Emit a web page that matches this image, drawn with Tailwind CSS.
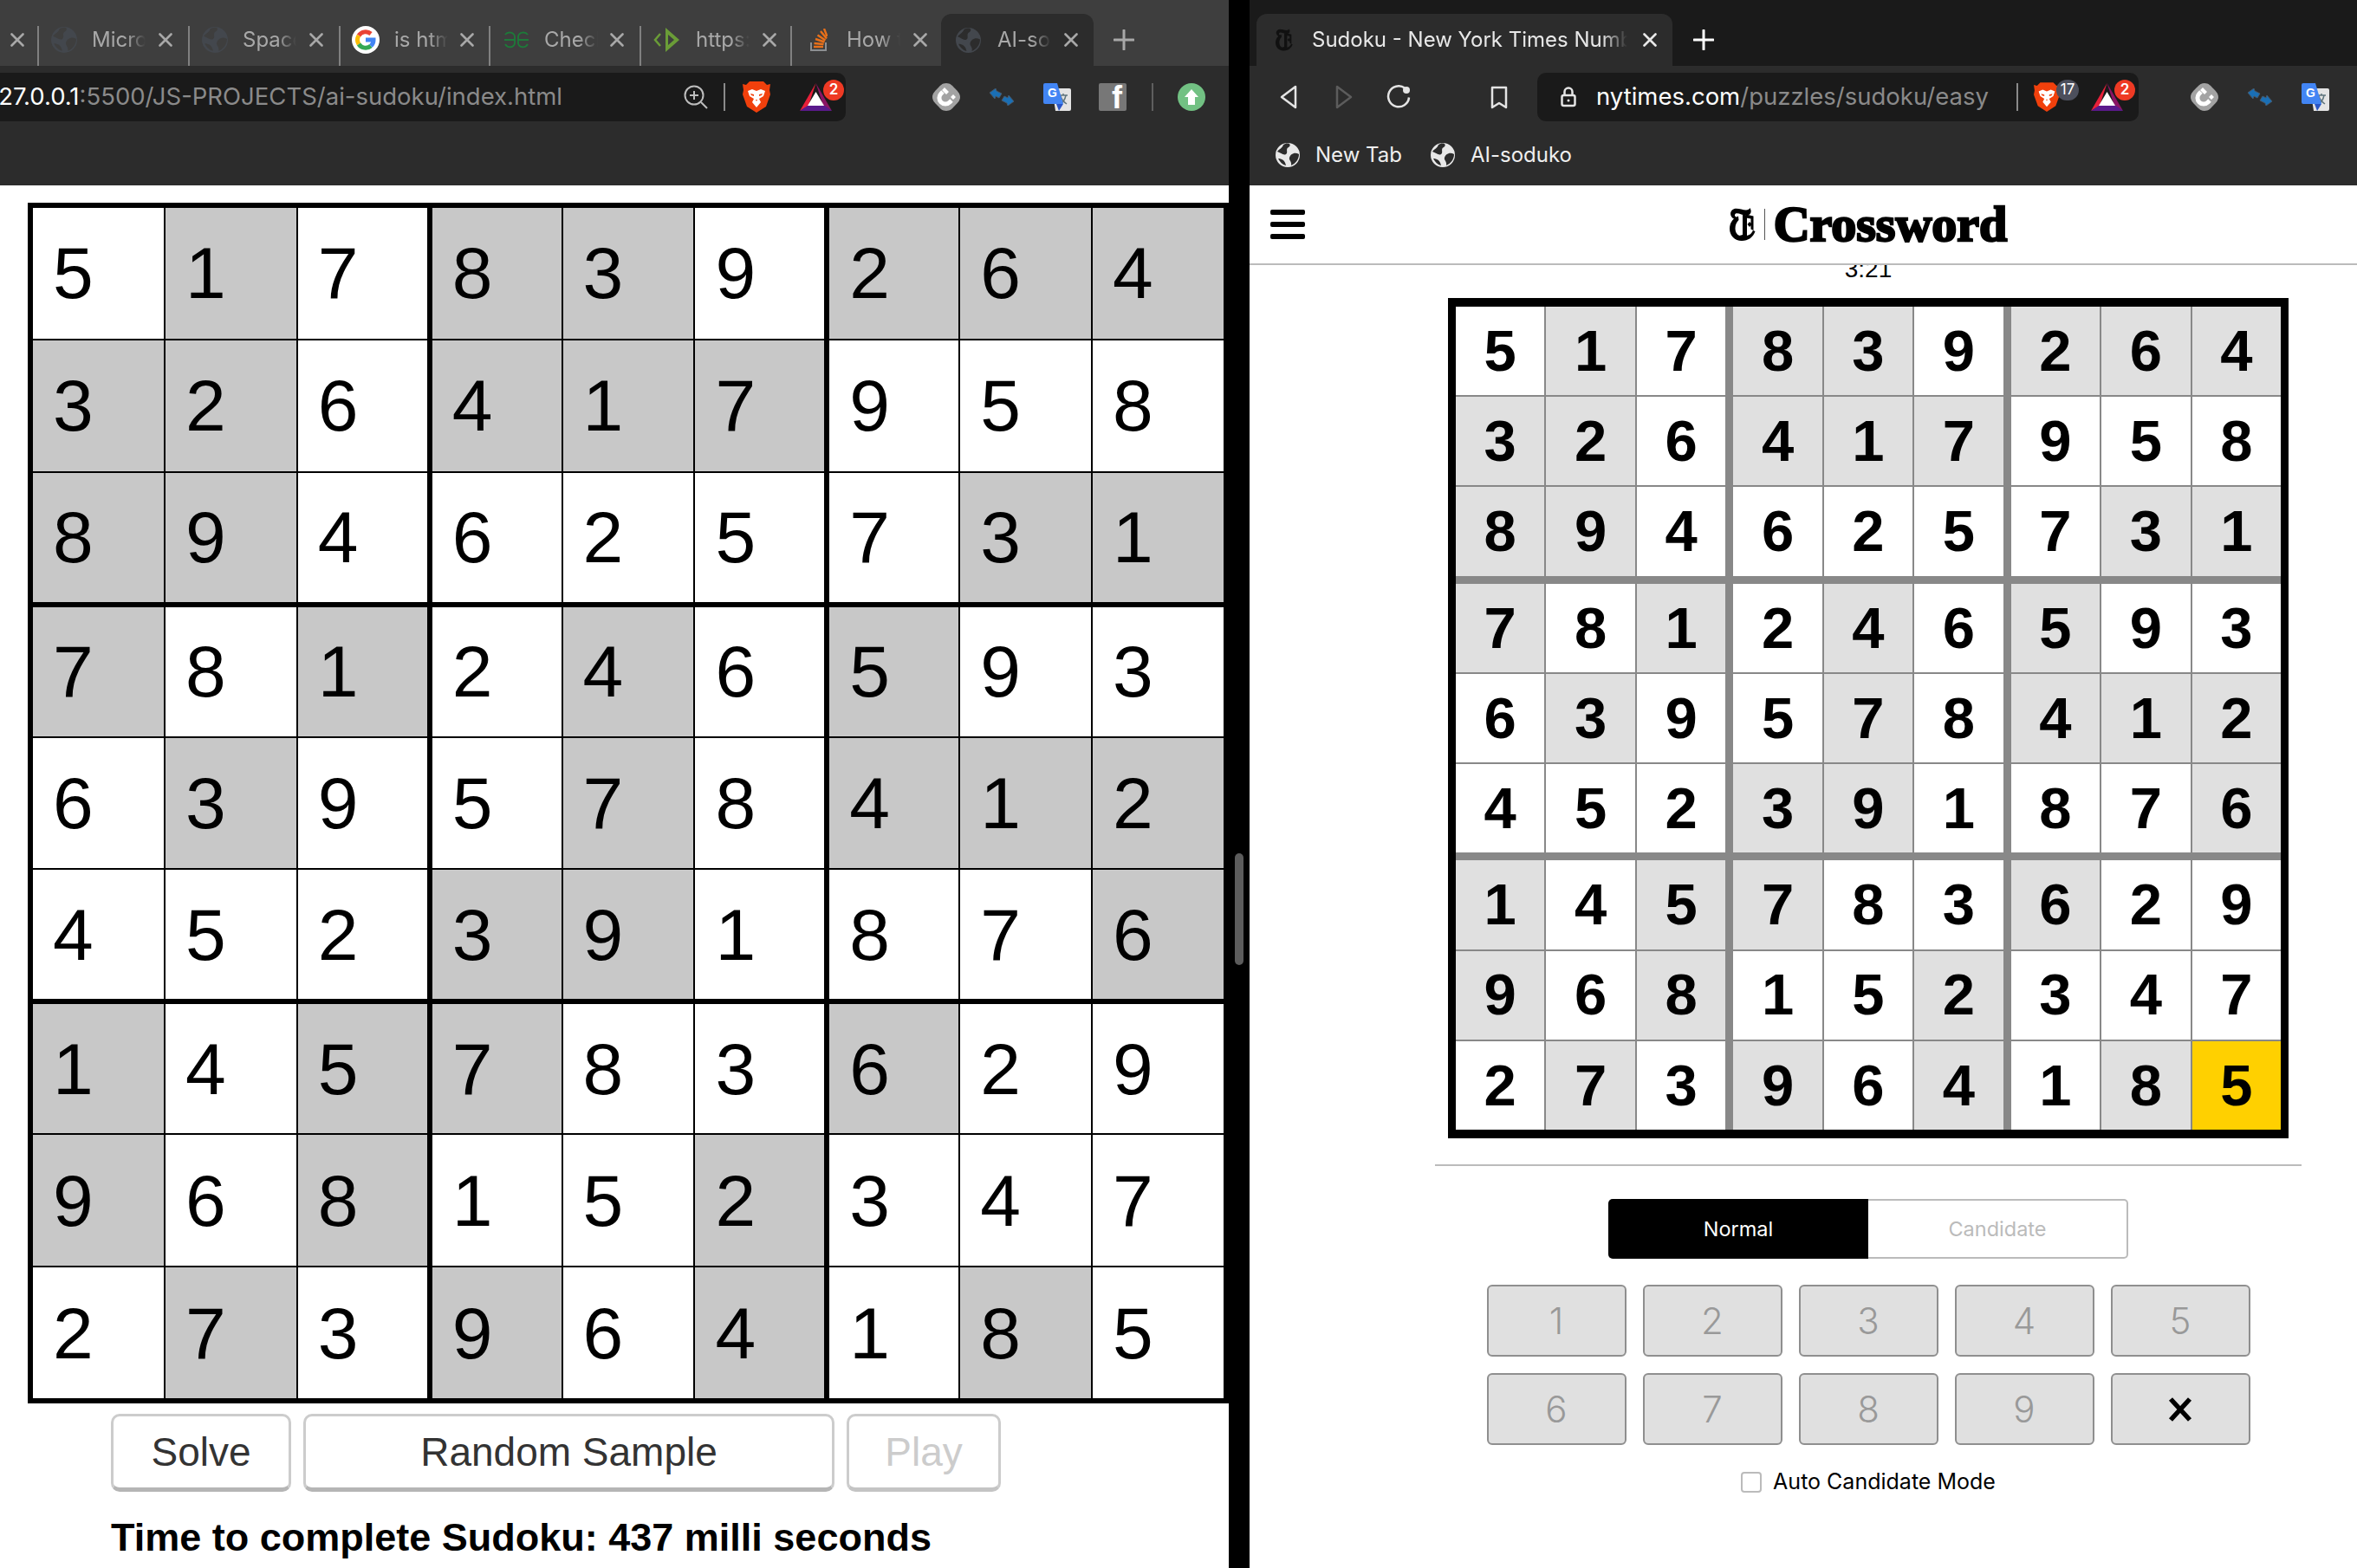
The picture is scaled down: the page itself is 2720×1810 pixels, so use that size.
<!DOCTYPE html>
<html lang="en">
<head>
  <meta charset="UTF-8" />
  <title>AI Sudoku vs NYT</title>
  <script src="https://cdn.jsdelivr.net/npm/@tailwindcss/browser@4"></script>
</head>
<body class="bg-black font-[Inter,sans-serif]">

<!-- shared icons -->
<svg class="hidden">
  <symbol id="x" viewBox="0 0 16 16"><path d="M1.5 1.5l13 13M14.5 1.5l-13 13" stroke="currentColor" stroke-width="2.6" stroke-linecap="round" fill="none"/></symbol>
  <symbol id="plus" viewBox="0 0 24 24"><path d="M12 1v22M1 12h22" stroke="currentColor" stroke-width="3" stroke-linecap="round" fill="none"/></symbol>
  <symbol id="globe" viewBox="0 0 28 28"><path fill="currentColor" fill-rule="evenodd" d="M14 0a14 14 0 1 0 0 28a14 14 0 1 0 0-28zM9 2C8 6 4 7 2 10C6 11 9 15 12 13C15 11 11 7 15 5C17 4 17 2 16 1C13 0 11 1 9 2zM27 13C22 10 17 13 16 17C15 20 19 21 18 26C23 24 27 19 27 13zM3 18C7 18 11 20 12 26C8 25 5 22 3 18z"/></symbol>
  <symbol id="brave" viewBox="0 0 32 36">
    <path fill="#f1400c" d="M8 0h16l4 4 4-1-1 7 1 5-5 14-11 7-11-7L0 15l1-5L0 3l4 1z"/>
    <path fill="#fff" d="M6 11l5-2 5 2 5-2 5 2-2 6-5 3 2 4-5 6-5-6 2-4-5-3z"/>
    <path fill="#f1400c" d="M9 14l4 1v2l-3-1zM23 14l-4 1v2l3-1zM15 21h2l-1 2z"/>
  </symbol>
  <symbol id="bat" viewBox="0 0 37 32">
    <path fill="#e8203a" d="M18.500 0L0 32L10 26z"/>
    <path fill="#8b1464" d="M18.500 0L37 32L27 26z"/>
    <path fill="#5a1a8c" d="M0 32h37l-8-6H9z"/>
    <path fill="#fff" d="M18.500 10L28 26H9z"/>
  </symbol>
  <symbol id="magnet" viewBox="0 0 32 32">
    <path fill="#a3a3a3" d="M16 0c5 0 7 3 10 6s6 6 6 10-3 7-6 10-5 6-10 6-7-3-10-6-6-6-6-10 3-7 6-10 5-6 10-6z"/>
    <path fill="none" stroke="#fff" stroke-width="5" d="M12 10l-2 2a6.500 6.500 0 0 0 10 10l2-2"/>
    <path fill="#fff" d="M14 5l5 5-3 3-5-5zM24 13l3 3-3 3-3-3z"/>
  </symbol>
  <symbol id="arrows" viewBox="0 0 30 20">
    <path fill="#1a6fb5" stroke="#46586a" stroke-width="1" d="M1 5l7-5 1 3 6 3-3 5-4-2-1 3z"/>
    <path fill="#1a6fb5" stroke="#46586a" stroke-width="1" d="M29 15l-7 5-1-3-6-3 3-5 4 2 1-3z"/>
  </symbol>
  <symbol id="translate" viewBox="0 0 32 32">
    <path fill="#e4e4e4" d="M10 6h20a2 2 0 0 1 2 2v22a2 2 0 0 1-2 2H14z"/>
    <path fill="none" stroke="#60757d" stroke-width="1.500" d="M18 14h10M23 12v2M26 14c-1 5-4 9-7 10M20 15c1 4 4 7 7 9"/>
    <path fill="#4285f4" d="M2 0h14l7 24H2a2 2 0 0 1-2-2V2a2 2 0 0 1 2-2z"/>
    <path fill="#2a56c6" d="M15 24h8l-5 8z"/>
    <text x="5" y="16" font-family="Liberation Sans" font-weight="700" font-size="14" fill="#fff">G</text>
  </symbol>
  <symbol id="google" viewBox="0 0 32 32">
    <circle cx="16" cy="16" r="16" fill="#fff"/>
    <path fill="none" stroke="#ea4335" stroke-width="5" d="M8 11a9.500 9.500 0 0 1 14-2"/>
    <path fill="none" stroke="#fbbc05" stroke-width="5" d="M8 11a9.500 9.500 0 0 0 0 10"/>
    <path fill="none" stroke="#34a853" stroke-width="5" d="M8 21a9.500 9.500 0 0 0 14 2"/>
    <path fill="none" stroke="#4285f4" stroke-width="5" d="M22 23a9.500 9.500 0 0 0 3-7H16"/>
  </symbol>
  <symbol id="gfg" viewBox="0 0 30 20">
    <path fill="none" stroke="#1d7a39" stroke-width="1.800" d="M2 4c3-4 10-3 11 2v8c-1 5-8 6-11 1M1 10h12M28 4c-3-4-10-3-11 2v8c1 5 8 6 11 1M29 10H17"/>
  </symbol>
  <symbol id="code" viewBox="0 0 32 28">
    <path fill="none" stroke="#6a9c37" stroke-width="2.500" d="M8 7l-6 7 6 7"/>
    <path fill="#6a9c37" d="M14 0l16 14-16 14zM17 8v12l7-6z" fill-rule="evenodd"/>
  </symbol>
  <symbol id="so" viewBox="0 0 20 26">
    <path fill="none" stroke="#8d8f92" stroke-width="2" d="M1 16v9h17v-9"/>
    <path fill="none" stroke="#e8701a" stroke-width="2.400" d="M4 21h11M4.500 17l11 1M6 12l10.500 3.500M8.500 7.500l9 6M12 3l7 8.500M16 0l3.500 9"/>
  </symbol>
  <symbol id="nyt" viewBox="0 0 60 76">
    <path d="M47 0c5 9 2 17-8 17C29 17 19 10 14 13c-4 3-2 7 2 9l-5 4C1 21-1 10 7 4c8-6 21 1 31 1 4 0 8-2 9-5z"/>
    <path fill-rule="evenodd" d="M20 19C7 24 0 35 0 48c0 16 12 28 28 28 15 0 26-8 31-22l-5-2c-3 7-8 11-14 12V17l-8-2-2 1v46l-7 2C17 62 13 56 13 47c0-8 3-14 8-19z"/>
    <path d="M38 15l17 4v33l-6-3V25l-11-2zM46 32l5 6-5 6-5-6z"/>
  </symbol>
</svg>

<div class="w-[2720px] h-[1810px] flex overflow-hidden">

  <!-- left window -->
  <section class="w-[1418px] shrink-0 flex flex-col bg-white">
    <div class="h-[76px] bg-[#3e3e3e] flex items-end text-[#a8a8a8] text-[24px]">
      <div class="w-[43px] h-[46px] pb-[14px] flex items-center justify-end pr-[15px]"><svg class="w-[16px] h-[16px]"><use href="#x"/></svg></div>
      <div class="w-[174px] h-[46px] pb-[14px] border-l-2 border-[#808080] flex items-center">
        <svg class="w-[30px] h-[30px] ml-[14px] text-[#43474d]"><use href="#globe"/></svg>
        <span class="w-[62px] ml-[17px] overflow-hidden whitespace-nowrap [mask-image:linear-gradient(to_right,black_65%,transparent)]">Microsoft</span>
        <svg class="w-[16px] h-[16px] ml-[15px]"><use href="#x"/></svg>
      </div>
      <div class="w-[174px] h-[46px] pb-[14px] border-l-2 border-[#808080] flex items-center">
        <svg class="w-[30px] h-[30px] ml-[14px] text-[#43474d]"><use href="#globe"/></svg>
        <span class="w-[62px] ml-[17px] overflow-hidden whitespace-nowrap [mask-image:linear-gradient(to_right,black_65%,transparent)]">Space</span>
        <svg class="w-[16px] h-[16px] ml-[15px]"><use href="#x"/></svg>
      </div>
      <div class="w-[173px] h-[46px] pb-[14px] border-l-2 border-[#808080] flex items-center">
        <svg class="w-[32px] h-[32px] ml-[13px]"><use href="#google"/></svg>
        <span class="w-[62px] ml-[17px] overflow-hidden whitespace-nowrap [mask-image:linear-gradient(to_right,black_65%,transparent)]">is html</span>
        <svg class="w-[16px] h-[16px] ml-[14px]"><use href="#x"/></svg>
      </div>
      <div class="w-[174px] h-[46px] pb-[14px] border-l-2 border-[#808080] flex items-center">
        <svg class="w-[30px] h-[20px] ml-[15px]"><use href="#gfg"/></svg>
        <span class="w-[62px] ml-[17px] overflow-hidden whitespace-nowrap [mask-image:linear-gradient(to_right,black_65%,transparent)]">Check</span>
        <svg class="w-[16px] h-[16px] ml-[14px]"><use href="#x"/></svg>
      </div>
      <div class="w-[174px] h-[46px] pb-[14px] border-l-2 border-[#808080] flex items-center">
        <svg class="w-[32px] h-[28px] ml-[14px]"><use href="#code"/></svg>
        <span class="w-[62px] ml-[17px] overflow-hidden whitespace-nowrap [mask-image:linear-gradient(to_right,black_65%,transparent)]">https:</span>
        <svg class="w-[16px] h-[16px] ml-[15px]"><use href="#x"/></svg>
      </div>
      <div class="w-[174px] h-[46px] pb-[14px] border-l-2 border-[#808080] flex items-center">
        <svg class="w-[20px] h-[26px] ml-[21px]"><use href="#so"/></svg>
        <span class="w-[62px] ml-[22px] overflow-hidden whitespace-nowrap [mask-image:linear-gradient(to_right,black_65%,transparent)]">How to</span>
        <svg class="w-[16px] h-[16px] ml-[15px]"><use href="#x"/></svg>
      </div>
      <div class="w-[176px] h-[60px] bg-[#2c2c2c] rounded-t-[12px] flex items-center">
        <svg class="w-[29px] h-[29px] ml-[17px] text-[#43474d]"><use href="#globe"/></svg>
        <span class="w-[62px] ml-[19px] overflow-hidden whitespace-nowrap [mask-image:linear-gradient(to_right,black_65%,transparent)]">AI-soduko</span>
        <svg class="w-[16px] h-[16px] ml-[15px]"><use href="#x"/></svg>
      </div>
      <svg class="w-[24px] h-[24px] ml-[23px] mb-[18px]"><use href="#plus"/></svg>
    </div>

    <div class="h-[138px] bg-[#2c2c2c] pt-[8px]">
      <div class="h-[56px] flex items-center">
        <div class="w-[976px] h-[56px] shrink-0 bg-[#1a1a1a] rounded-r-[10px] flex items-center">
          <div class="w-[649px] shrink-0 flex justify-end overflow-hidden text-[27.5px] whitespace-nowrap text-[#8a8a8a]">
            <span class="shrink-0"><span class="text-white">127.0.0.1</span>:5500/JS-PROJECTS/ai-sudoku/index.html</span>
          </div>
          <svg class="w-[28px] h-[28px] ml-[140px]" viewBox="0 0 28 28" fill="none" stroke="#bdbdbd" stroke-width="2"><circle cx="12" cy="12" r="10.500"/><path d="M12 7v10M7 12h10M20 20l7 7"/></svg>
          <div class="w-[2px] h-[32px] bg-[#8a8a8a] ml-[18px]"></div>
          <svg class="w-[32px] h-[36px] ml-[20px]"><use href="#brave"/></svg>
          <div class="relative ml-[34px] w-[37px] h-[32px]">
            <svg class="w-[37px] h-[32px]"><use href="#bat"/></svg>
            <span class="absolute left-[27px] top-[-4px] w-[24px] h-[24px] rounded-full bg-[#ee3a24] text-white text-[17px] font-semibold flex items-center justify-center">2</span>
          </div>
        </div>
        <svg class="w-[32px] h-[32px] ml-[100px]"><use href="#magnet"/></svg>
        <svg class="w-[30px] h-[20px] ml-[33px]"><use href="#arrows"/></svg>
        <svg class="w-[32px] h-[32px] ml-[33px]"><use href="#translate"/></svg>
        <div class="w-[32px] h-[32px] ml-[32px] bg-[#777] rounded-[2px] overflow-hidden flex justify-end items-end pr-[5px] font-['Liberation_Sans',sans-serif] font-bold text-white text-[36px] leading-[30px]">f</div>
        <div class="w-[2px] h-[32px] bg-[#5f5f5f] ml-[29px]"></div>
        <div class="w-[32px] h-[32px] ml-[28px] rounded-full bg-[#72c183] flex items-center justify-center">
          <svg class="w-[16px] h-[18px]" viewBox="0 0 16 18"><path fill="#fff" d="M8 0l8 9h-4v9H4V9H0z"/></svg>
        </div>
      </div>
    </div>

    <div class="flex-1 pt-[20px] font-['Liberation_Sans',sans-serif]">
      <div id="ai-board" class="ml-[32px] w-[1386px] h-[1386px] border-[5px] border-black grid grid-cols-9 grid-rows-9"></div>
      <div class="ml-[128px] mt-[12px] flex gap-[14px] text-[46px] text-[#333]">
        <button class="w-[208px] h-[90px] border-[3px] border-[#ccc] border-b-[5px] border-b-[#b5b5b5] rounded-[10px]">Solve</button>
        <button class="w-[613px] h-[90px] border-[3px] border-[#ccc] border-b-[5px] border-b-[#b5b5b5] rounded-[10px]">Random Sample</button>
        <button class="w-[178px] h-[90px] border-[3px] border-[#ccc] border-b-[5px] border-b-[#c4c4c4] rounded-[10px] text-[#ccc]">Play</button>
      </div>
      <p class="ml-[128px] mt-[22px] text-[45px] font-bold text-black leading-[62px]">Time to complete Sudoku: 437 milli seconds</p>
    </div>
  </section>

  <!-- divider -->
  <div class="w-[24px] shrink-0 bg-black flex justify-center">
    <div class="w-[10px] h-[129px] mt-[985px] rounded-full bg-[#5c5c5c]"></div>
  </div>

  <!-- right window -->
  <section class="w-[1278px] shrink-0 flex flex-col bg-white overflow-hidden">
    <div class="h-[76px] bg-[#1a1a1a] flex items-end text-[24px]">
      <div class="w-[480px] h-[60px] ml-[8px] bg-[#2c2c2c] rounded-t-[12px] flex items-center text-[#e8e8e8]">
        <svg class="w-[20px] h-[26px] ml-[22px] text-[#111]" viewBox="0 0 60 76" fill="currentColor"><use href="#nyt"/></svg>
        <span class="w-[364px] ml-[22px] overflow-hidden whitespace-nowrap [mask-image:linear-gradient(to_right,black_92%,transparent)]">Sudoku - New York Times Number</span>
        <svg class="w-[16px] h-[16px] ml-[18px]"><use href="#x"/></svg>
      </div>
      <svg class="w-[24px] h-[24px] ml-[24px] mb-[18px] text-white"><use href="#plus"/></svg>
    </div>

    <div class="h-[138px] bg-[#2c2c2c] pt-[8px] flex flex-col">
      <div class="h-[56px] flex items-center shrink-0">
        <svg class="w-[20px] h-[28px] ml-[35px]" viewBox="0 0 20 28" fill="none" stroke="#e4e4e4" stroke-width="2.500" stroke-linejoin="round"><path d="M18 2v24L2 14z"/></svg>
        <svg class="w-[20px] h-[28px] ml-[44px]" viewBox="0 0 20 28" fill="none" stroke="#5c5c5c" stroke-width="2.500" stroke-linejoin="round"><path d="M2 2v24l16-12z"/></svg>
        <svg class="w-[28px] h-[28px] ml-[39px]" viewBox="0 0 28 28" fill="none"><path d="M21 3.500a12 12 0 1 0 5 11" stroke="#e4e4e4" stroke-width="2.500"/><circle cx="23" cy="6" r="4" fill="#e4e4e4"/></svg>
        <svg class="w-[20px] h-[27px] ml-[92px]" viewBox="0 0 20 27" fill="none" stroke="#e4e4e4" stroke-width="2.500" stroke-linejoin="round"><path d="M2 2h16v23l-8-5-8 5z"/></svg>
        <div class="w-[694px] h-[56px] ml-[34px] bg-[#1a1a1a] rounded-[10px] flex items-center shrink-0">
          <svg class="w-[18px] h-[24px] ml-[27px]" viewBox="0 0 18 24" fill="none" stroke="#e4e4e4" stroke-width="2.500"><path d="M4.500 10V6a4.500 4.500 0 0 1 9 0v4"/><rect x="1.500" y="10" width="15" height="12" rx="2"/><circle cx="9" cy="16" r="1.500" fill="#e4e4e4" stroke="none"/></svg>
          <span class="ml-[23px] w-[453px] text-[27.5px] whitespace-nowrap text-[#8a8a8a]"><span class="text-white">nytimes.com</span>/puzzles/sudoku/easy</span>
          <div class="w-[2px] h-[32px] bg-[#8a8a8a] ml-[32px]"></div>
          <div class="relative w-[32px] h-[36px] ml-[18px]">
            <svg class="w-[30px] h-[36px]"><use href="#brave"/></svg>
            <span class="absolute left-[26px] top-[-2px] w-[26px] h-[24px] rounded-full bg-[#4c4f5c] text-white text-[17px] flex items-center justify-center">17</span>
          </div>
          <div class="relative ml-[34px] w-[37px] h-[32px]">
            <svg class="w-[37px] h-[32px]"><use href="#bat"/></svg>
            <span class="absolute left-[27px] top-[-4px] w-[24px] h-[24px] rounded-full bg-[#ee3a24] text-white text-[17px] font-semibold flex items-center justify-center">2</span>
          </div>
        </div>
        <svg class="w-[32px] h-[32px] ml-[60px]"><use href="#magnet"/></svg>
        <svg class="w-[30px] h-[20px] ml-[33px]"><use href="#arrows"/></svg>
        <svg class="w-[32px] h-[32px] ml-[33px]"><use href="#translate"/></svg>
      </div>
      <div class="flex-1 flex items-center text-[#efefef] text-[24px] pt-[4px]">
        <svg class="w-[28px] h-[28px] ml-[30px] text-[#e8e8e8]"><use href="#globe"/></svg>
        <span class="ml-[18px]">New Tab</span>
        <svg class="w-[28px] h-[28px] ml-[33px] text-[#e8e8e8]"><use href="#globe"/></svg>
        <span class="ml-[18px]">AI-soduko</span>
      </div>
    </div>

    <!-- NYT page, wider than the visible pane -->
    <div class="w-[1428px] flex-1 flex flex-col items-center">
      <header class="relative z-10 w-full h-[92px] bg-white border-b-2 border-[#bbb] flex items-center justify-center">
        <div class="absolute left-[24px] top-[28px] w-[40px] flex flex-col gap-[8px]">
          <div class="h-[6px] rounded-[2px] bg-black"></div>
          <div class="h-[6px] rounded-[2px] bg-black"></div>
          <div class="h-[6px] rounded-[2px] bg-black"></div>
        </div>
        <svg class="w-[30px] h-[38px]" viewBox="0 0 60 76" fill="#000"><use href="#nyt"/></svg>
        <div class="w-[1px] h-[36px] bg-[#555] ml-[10px]"></div>
        <span class="ml-[10px] font-['Liberation_Serif',serif] font-bold text-[58px] leading-[52px] text-black [-webkit-text-stroke:2.500px_black]">Crossword</span>
      </header>
      <div class="h-[50px] -mt-[12px] text-[28px] leading-[34px] text-black font-['Liberation_Sans',sans-serif]">3:21</div>
      <div id="nyt-board" class="w-[970px] h-[970px] border-y-[10px] border-x-[9px] border-black bg-[#888] grid grid-cols-3 grid-rows-3 gap-[9px] font-['Liberation_Sans',sans-serif]"></div>
      <div class="w-[1000px] h-[2px] bg-[#bbb] mt-[30px]"></div>
      <div class="mt-[38px] flex w-[600px] h-[69px] text-[23.5px]">
        <div class="w-[300px] bg-black text-white rounded-l-[5px] flex items-center justify-center">Normal</div>
        <div class="w-[300px] border-2 border-l-0 border-[#bbb] text-[#bbb] rounded-r-[5px] flex items-center justify-center">Candidate</div>
      </div>
      <div class="mt-[30px] grid grid-cols-5 gap-x-[19px] gap-y-[19px] text-[42px] font-light text-[#999]">
        <button class="w-[161px] h-[83px] bg-[#e0e0e0] border-2 border-[#8f8f8f] rounded-[6px]">1</button>
        <button class="w-[161px] h-[83px] bg-[#e0e0e0] border-2 border-[#8f8f8f] rounded-[6px]">2</button>
        <button class="w-[161px] h-[83px] bg-[#e0e0e0] border-2 border-[#8f8f8f] rounded-[6px]">3</button>
        <button class="w-[161px] h-[83px] bg-[#e0e0e0] border-2 border-[#8f8f8f] rounded-[6px]">4</button>
        <button class="w-[161px] h-[83px] bg-[#e0e0e0] border-2 border-[#8f8f8f] rounded-[6px]">5</button>
        <button class="w-[161px] h-[83px] bg-[#e0e0e0] border-2 border-[#8f8f8f] rounded-[6px]">6</button>
        <button class="w-[161px] h-[83px] bg-[#e0e0e0] border-2 border-[#8f8f8f] rounded-[6px]">7</button>
        <button class="w-[161px] h-[83px] bg-[#e0e0e0] border-2 border-[#8f8f8f] rounded-[6px]">8</button>
        <button class="w-[161px] h-[83px] bg-[#e0e0e0] border-2 border-[#8f8f8f] rounded-[6px]">9</button>
        <button class="w-[161px] h-[83px] bg-[#e0e0e0] border-2 border-[#8f8f8f] rounded-[6px] flex items-center justify-center">
          <svg class="w-[28px] h-[28px]" viewBox="0 0 28 28"><path d="M3 2l22 24M25 2L3 26" stroke="#000" stroke-width="5.500" fill="none"/></svg>
        </button>
      </div>
      <div class="mt-[24px] flex items-center text-[25px] text-black">
        <div class="w-[24px] h-[24px] border-2 border-[#bbb] rounded-[4px] bg-white"></div>
        <span class="ml-[13px]">Auto Candidate Mode</span>
      </div>
    </div>
  </section>
</div>

<script>
  const grid = [
    [5,1,7,8,3,9,2,6,4],
    [3,2,6,4,1,7,9,5,8],
    [8,9,4,6,2,5,7,3,1],
    [7,8,1,2,4,6,5,9,3],
    [6,3,9,5,7,8,4,1,2],
    [4,5,2,3,9,1,8,7,6],
    [1,4,5,7,8,3,6,2,9],
    [9,6,8,1,5,2,3,4,7],
    [2,7,3,9,6,4,1,8,5]
  ];
  // 1 = shaded cell, the two boards shade the same cells
  const shade = [
    [0,1,0,1,1,0,1,1,1],
    [1,1,0,1,1,1,0,0,0],
    [1,1,0,0,0,0,0,1,1],
    [1,0,1,0,1,0,1,0,0],
    [0,1,0,0,1,0,1,1,1],
    [0,0,0,1,1,0,0,0,1],
    [1,0,1,1,0,0,1,0,0],
    [1,0,1,0,0,1,0,0,0],
    [0,1,0,1,0,1,0,1,0]
  ];

  const aiBoard = document.getElementById('ai-board');
  grid.forEach((row, r) => row.forEach((n, c) => {
    const cell = document.createElement('div');
    let cls = 'min-w-0 min-h-0 border border-black pl-[23px] flex items-center text-[84px] text-black ';
    cls += shade[r][c] ? 'bg-[#c8c8c8] ' : 'bg-white ';
    if (c === 2 || c === 5) cls += 'border-r-[3px] ';
    if (c === 3 || c === 6) cls += 'border-l-[3px] ';
    if (r === 2 || r === 5) cls += 'border-b-[3px] ';
    if (r === 3 || r === 6) cls += 'border-t-[3px] ';
    cell.className = cls;
    cell.textContent = n;
    aiBoard.appendChild(cell);
  }));

  const nytBoard = document.getElementById('nyt-board');
  for (let br = 0; br < 3; br++) {
    for (let bc = 0; bc < 3; bc++) {
      const box = document.createElement('div');
      box.className = 'min-w-0 min-h-0 grid grid-cols-3 grid-rows-3 gap-[2px]';
      for (let r = br * 3; r < br * 3 + 3; r++) {
        for (let c = bc * 3; c < bc * 3 + 3; c++) {
          const cell = document.createElement('div');
          let bg = shade[r][c] ? 'bg-[#e0e0e0]' : 'bg-white';
          if (r === 8 && c === 8) bg = 'bg-[#ffd000]';
          cell.className = 'min-w-0 min-h-0 flex items-center justify-center font-bold text-[67px] text-black ' + bg;
          cell.textContent = grid[r][c];
          box.appendChild(cell);
        }
      }
      nytBoard.appendChild(box);
    }
  }
</script>
</body>
</html>
